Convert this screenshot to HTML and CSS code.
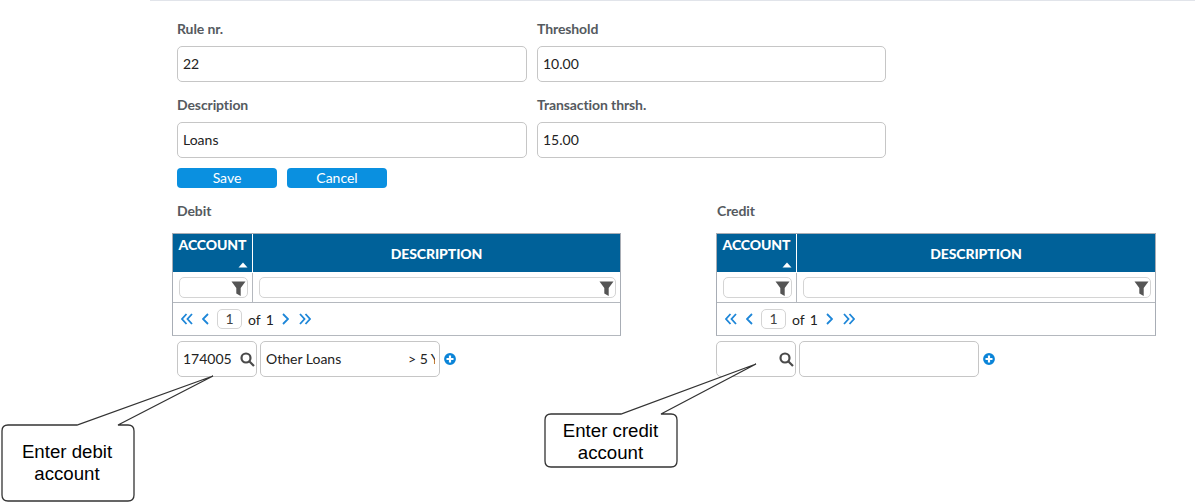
FILE: index.html
```html
<!DOCTYPE html>
<html lang="en">
<head>
<meta charset="utf-8">
<title>Rule</title>
<link rel="stylesheet" href="styles.css">
</head>
<body>
<div class="page">
  <form class="form">
    <div class="field"><label>Rule nr.</label><div class="input">22</div></div>
    <div class="field"><label>Threshold</label><div class="input">10.00</div></div>
    <div class="field"><label>Description</label><div class="input">Loans</div></div>
    <div class="field"><label>Transaction thrsh.</label><div class="input">15.00</div></div>
  </form>
  <div class="actions">
    <button class="btn" type="button">Save</button>
    <button class="btn" type="button">Cancel</button>
  </div>
  <div class="panels">
    <section class="panel panel-debit">
      <h3 class="panel-title">Debit</h3>
      <div class="table">
        <div class="row head">
          <div class="cell col-account"><span>ACCOUNT</span><svg class="sort" viewBox="0 0 10 6" width="10" height="6"><path d="M5 0.500 9.500 5.500H0.500Z"/></svg></div>
          <div class="cell col-desc">DESCRIPTION</div>
        </div>
        <div class="row filters">
          <div class="cell col-account"><div class="filter"><svg class="funnel" viewBox="0 0 15 15" width="15" height="15"><path d="M0.500 0.500h14L9.700 7v8L5.300 12.500V7Z"/></svg></div></div>
          <div class="cell col-desc"><div class="filter"><svg class="funnel" viewBox="0 0 15 15" width="15" height="15"><path d="M0.500 0.500h14L9.700 7v8L5.300 12.500V7Z"/></svg></div></div>
        </div>
        <div class="pager">
          <svg class="pg" viewBox="0 0 12 12" width="12" height="12"><path d="M5.500 1 1 6l4.500 5M11 1 6.500 6l4.500 5"/></svg>
          <svg class="pg pg-prev" viewBox="0 0 7 12" width="7" height="12"><path d="M6 1 1 6l5 5"/></svg>
          <span class="page-box">1</span><span class="of">of</span><span class="total">1</span>
          <svg class="pg pg-next" viewBox="0 0 7 12" width="7" height="12"><path d="M1 1l5 5-5 5"/></svg>
          <svg class="pg" viewBox="0 0 12 12" width="12" height="12"><path d="M1 1l4.500 5L1 11M6.500 1 11 6l-4.500 5"/></svg>
        </div>
      </div>
      <div class="lookup lookup-debit">
        <div class="input code">174005<svg class="search" viewBox="0 0 15 15" width="15" height="15"><circle cx="6" cy="6" r="4.500"/><path d="M9.500 9.500l4.500 4.500"/></svg></div>
        <div class="input name"><span class="name-main">Other Loans</span><span class="name-tail">&gt; 5 Y</span></div>
        <svg class="plus" viewBox="0 0 14 14" width="14" height="14"><circle cx="7" cy="7" r="7"/><path d="M3.500 7h7M7 3.500v7"/></svg>
      </div>
    </section>
    <section class="panel panel-credit">
      <h3 class="panel-title">Credit</h3>
      <div class="table">
        <div class="row head">
          <div class="cell col-account"><span>ACCOUNT</span><svg class="sort" viewBox="0 0 10 6" width="10" height="6"><path d="M5 0.500 9.500 5.500H0.500Z"/></svg></div>
          <div class="cell col-desc">DESCRIPTION</div>
        </div>
        <div class="row filters">
          <div class="cell col-account"><div class="filter"><svg class="funnel" viewBox="0 0 15 15" width="15" height="15"><path d="M0.500 0.500h14L9.700 7v8L5.300 12.500V7Z"/></svg></div></div>
          <div class="cell col-desc"><div class="filter"><svg class="funnel" viewBox="0 0 15 15" width="15" height="15"><path d="M0.500 0.500h14L9.700 7v8L5.300 12.500V7Z"/></svg></div></div>
        </div>
        <div class="pager">
          <svg class="pg" viewBox="0 0 12 12" width="12" height="12"><path d="M5.500 1 1 6l4.500 5M11 1 6.500 6l4.500 5"/></svg>
          <svg class="pg pg-prev" viewBox="0 0 7 12" width="7" height="12"><path d="M6 1 1 6l5 5"/></svg>
          <span class="page-box">1</span><span class="of">of</span><span class="total">1</span>
          <svg class="pg pg-next" viewBox="0 0 7 12" width="7" height="12"><path d="M1 1l5 5-5 5"/></svg>
          <svg class="pg" viewBox="0 0 12 12" width="12" height="12"><path d="M1 1l4.500 5L1 11M6.500 1 11 6l-4.500 5"/></svg>
        </div>
      </div>
      <div class="lookup">
        <div class="input code"><svg class="search" viewBox="0 0 15 15" width="15" height="15"><circle cx="6" cy="6" r="4.500"/><path d="M9.500 9.500l4.500 4.500"/></svg></div>
        <div class="input name"></div>
        <svg class="plus" viewBox="0 0 14 14" width="14" height="14"><circle cx="7" cy="7" r="7"/><path d="M3.500 7h7M7 3.500v7"/></svg>
      </div>
    </section>
  </div>
</div>
<svg class="callouts" width="1195" height="503" viewBox="0 0 1195 503">
  <path class="shape" d="M8 425H77L213 376 118 425H128Q134 425 134 431V495Q134 501 128 501H8Q2 501 2 495V431Q2 425 8 425Z"/>
  <text class="note" x="67" y="458">Enter debit</text>
  <text class="note" x="67" y="480">account</text>
  <path class="shape" d="M551 414H621L756 364 661 414H671Q677 414 677 420V461Q677 467 671 467H551Q545 467 545 461V420Q545 414 551 414Z"/>
  <text class="note" x="610.500" y="437">Enter credit</text>
  <text class="note" x="610.500" y="459">account</text>
</svg>
</body>
</html>
```

FILE: styles.css
```css
* { box-sizing: border-box; }
html, body { margin: 0; padding: 0; background: #fff; }
body {
  position: relative;
  height: 503px;
  overflow: hidden;
  font-family: Lato, "Open Sans", sans-serif;
  font-size: 14px;
  color: #222;
}
.page {
  margin-left: 150px;
  border-top: 1px solid #e1e4ea;
  padding: 0 0 0 22px;
}
.form {
  display: grid;
  grid-template-columns: 350px 349px;
  column-gap: 10px;
  row-gap: 14px;
  padding: 19px 0 0 5px;
}
.field label {
  display: block;
  height: 26px;
  line-height: 18px;
  font-weight: 700;
  font-size: 14px;
  color: #555a60;
  letter-spacing: -0.1px;
}
.input {
  height: 36px;
  border: 1px solid #c6c6c6;
  border-radius: 5px;
  background: #fff;
  padding: 0 5px;
  line-height: 34px;
  font-size: 14px;
  color: #222;
}
.actions {
  display: flex;
  gap: 10px;
  padding: 10px 0 0 5px;
}
.btn {
  width: 100px;
  height: 20px;
  padding: 0;
  border: 0;
  border-radius: 4px;
  background: #0a90e0;
  color: #fff;
  font: 14px/20px Lato, sans-serif;
}
.panels {
  display: grid;
  grid-template-columns: 449px 440px;
  column-gap: 95px;
  padding-top: 14px;
}
.panel-title {
  margin: 0 0 13px 5px;
  height: 18px;
  font-size: 14px;
  line-height: 18px;
  font-weight: 700;
  color: #555a60;
  letter-spacing: -0.1px;
}
.panel-credit .panel-title { margin-left: 1px; }
.table {
  border: 1px solid #a8adb5;
  border-bottom-color: #b4b8be;
}
.row { display: flex; }
.head {
  height: 39px;
  background: #006199;
  color: #fff;
  font-weight: 900;
  font-size: 14px;
  letter-spacing: -0.1px;
  border-bottom: 1px solid #fff;
}
.cell { flex: none; }
.col-account { width: 80px; border-right: 1px solid #b4b8be; }
.col-desc { flex: 1; min-width: 0; }
.head .col-account {
  display: flex;
  flex-direction: column;
  align-items: center;
  padding-top: 2px;
  line-height: 18px;
  border-right-color: #fff;
}
.head .sort { margin: 8px 0 0 60px; flex: none; fill: #fff; }
.head .col-desc { text-align: center; line-height: 39px; }
.filters { height: 30px; border-bottom: 1px solid #b4b8be; }
.filters .cell { padding: 4px 4px 5px 6px; }
.filter {
  height: 21px;
  border: 1px solid #d4d4d4;
  border-radius: 5px;
  display: flex;
  justify-content: flex-end;
  align-items: center;
  padding-right: 1px;
}
.funnel { fill: #555; flex: none; margin-top: 2px; }
.pager {
  height: 32px;
  display: flex;
  align-items: center;
  padding: 0 0 0 8px;
  font-size: 14px;
  color: #222;
}
.pg { fill: none; stroke: #1d86d8; stroke-width: 1.800; }
.pg-prev { margin: 0 8px 0 9px; }
.pg-next { margin: 0 10px 0 8px; }
.page-box {
  width: 25px;
  height: 20px;
  border: 1px solid #d4d4d4;
  border-radius: 5px;
  text-align: center;
  line-height: 18px;
  color: #444;
  margin-right: 6px;
}
.of { margin-right: 5px; }
.lookup {
  display: flex;
  align-items: center;
  gap: 3px;
  margin-top: 5px;
}
.lookup-debit { padding-left: 5px; }
.code {
  width: 80px;
  display: flex;
  justify-content: space-between;
  align-items: center;
  padding: 0 1px 0 5px;
}
.code .search { margin-left: auto; flex: none; fill: none; stroke: #4a4a4a; stroke-width: 2.200; }
.name {
  width: 180px;
  display: flex;
  justify-content: space-between;
  overflow: hidden;
  padding-right: 4px;
}
.name-tail { width: 27px; overflow: hidden; white-space: nowrap; }
.plus { fill: #0a84d8; stroke: #fff; stroke-width: 2.200; }
.callouts { position: absolute; left: 0; top: 0; pointer-events: none; }
.shape { fill: #fff; stroke: #333; stroke-width: 1.300; }
.note {
  font-family: "Liberation Sans", Arial, sans-serif;
  font-size: 18.670px;
  text-anchor: middle;
  fill: #000;
}
```
